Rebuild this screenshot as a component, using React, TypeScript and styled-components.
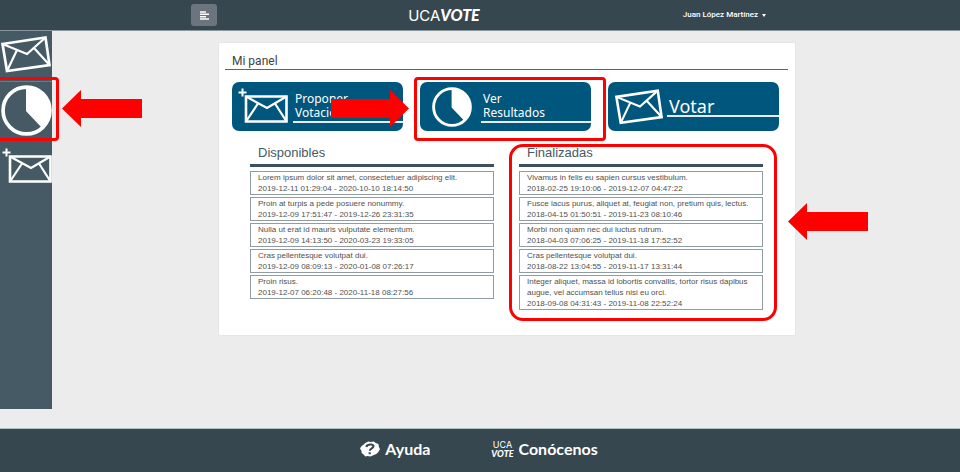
import React from "react";
import styled, { createGlobalStyle, css } from "styled-components";

const slate = "#37474f";
const red = "#ff0000";

const GlobalStyle = createGlobalStyle`
  *, *::before, *::after { box-sizing: border-box; }
  body {
    margin: 0;
    background: #ececec;
    color: #455a64;
    font-family: "Liberation Sans", Arial, sans-serif;
  }
  button { font: inherit; cursor: pointer; }
  svg { display: block; flex: none; }
`;

const Page = styled.div`
  min-height: 100vh;
  display: flex;
  flex-direction: column;
`;

const Header = styled.header`
  display: flex;
  align-items: center;
  height: 31px;
  padding: 0 194px 0 191px;
  background: ${slate};
  border-bottom: 1px solid #8b979d;
`;

const MenuButton = styled.button`
  display: flex;
  align-items: center;
  justify-content: center;
  width: 26px;
  height: 22px;
  padding: 0;
  border: 0;
  border-radius: 3px;
  background: #6c757d;
  color: #fff;
`;

const Brand = styled.a`
  display: flex;
  align-items: baseline;
  margin: 0 12px 0 auto;
  color: #fff;
  text-decoration: none;
  font: 400 15px/20px Inter, sans-serif;
`;

const BrandMark = styled.span`
  font: italic 900 16px/20px Lato, sans-serif;
`;

const UserButton = styled.button`
  display: flex;
  align-items: center;
  gap: 4px;
  margin-left: auto;
  padding: 0;
  border: 0;
  background: none;
  color: #fff;
  && { font: 500 8px/12px Roboto, sans-serif; }
`;

const Caret = styled.span`
  border: 2px solid transparent;
  border-top: 3px solid #fff;
  border-bottom: 0;
`;

const Body = styled.div`
  flex: 1;
  display: flex;
  padding-bottom: 19px;
`;

const Sidebar = styled.nav`
  flex: none;
  width: 52px;
  background: #455a64;
`;

const SideLink = styled.a<{ $height: number; $lift?: number }>`
  position: relative;
  display: flex;
  align-items: center;
  justify-content: flex-end;
  height: ${(p) => p.$height}px;
  padding-bottom: ${(p) => p.$lift ?? 0}px;

  & + & { border-top: 1px solid #6b7c84; }
`;

const Main = styled.main`
  flex: 1;
  min-width: 0;
  padding: 11px 164px 0 166px;
`;

const Panel = styled.section`
  padding: 11px 7px 25px 6px;
  background: #fff;
  border: 1px solid #e6e6e6;
  border-radius: 2px;
`;

const PanelTitle = styled.h1`
  margin: 0;
  padding: 0 7px;
  border-bottom: 1px solid #546871;
  color: #424242;
  font: 400 12px/15px Roboto, sans-serif;
`;

const Actions = styled.div`
  display: grid;
  grid-template-columns: repeat(3, 1fr);
  gap: 17px;
  padding: 12px 9px 0 7px;
`;

const ActionSlot = styled.div`
  position: relative;
`;

const ActionButton = styled.button<{ $inset?: number }>`
  display: flex;
  align-items: center;
  width: 100%;
  height: 49px;
  padding: 0 0 0 ${(p) => p.$inset ?? 6}px;
  border: 0;
  border-radius: 7px;
  background: #00567c;
  color: #fff;
  text-align: left;
`;

const ActionLabel = styled.span<{ $large?: boolean; $gap?: number }>`
  flex: 1;
  margin-left: ${(p) => p.$gap ?? 5}px;
  padding-left: 2px;
  border-bottom: 2px solid #e4eef2;
  font-family: "Noto Sans", sans-serif;
  ${(p) =>
    p.$large
      ? css`
          font-size: 18px;
          line-height: 18px;
        `
      : css`
          margin-top: 1px;
          padding-bottom: 1px;
          font-size: 12px;
          line-height: 14px;
        `}
`;

const Lists = styled.div`
  display: grid;
  grid-template-columns: repeat(2, 1fr);
  gap: 25px;
  padding: 13px 25px 0 25px;
`;

const Column = styled.section`
  position: relative;
`;

const ColumnTitle = styled.h2`
  margin: 0 0 4px;
  padding: 0 8px 2px;
  border-bottom: 3px solid #3c5060;
  font-size: 13px;
  font-weight: 400;
  line-height: 18px;
`;

const Items = styled.ul`
  display: grid;
  gap: 2px;
  margin: 0;
  padding: 0;
  list-style: none;
`;

const Item = styled.li`
  padding: 0 7px;
  border: 1px solid #8f9ca2;
  color: #505050;
  font-size: 8px;
  line-height: 11px;
`;

const Line = styled.div``;

const Footer = styled.footer`
  display: flex;
  justify-content: center;
  gap: 61px;
  height: 44px;
  padding: 0 2px 3px 0;
  background: ${slate};
  border-top: 1px solid #b0bcc1;
`;

const FooterLink = styled.a`
  display: flex;
  align-items: center;
  gap: 5px;
  color: #fff;
  text-decoration: none;
  font: 700 16px/20px Lato, sans-serif;
`;

const StackedMark = styled.span`
  display: grid;
  justify-items: center;
  font: 400 9px/9px Inter, sans-serif;
`;

const StackedBold = styled.span`
  font: italic 900 9px/9px Lato, sans-serif;
`;

const sideMarker = css`
  top: -5px;
  left: -3px;
  width: 62px;
  height: 64px;
  border-radius: 4px;
`;
const actionMarker = css`
  inset: -5px -15px -10px -6px;
  border-radius: 4px;
`;
const columnMarker = css`
  inset: 0 -14px -11px -10px;
  border-radius: 14px;
`;
const markers = { side: sideMarker, action: actionMarker, column: columnMarker };

const Marker = styled.span<{ $kind: keyof typeof markers }>`
  position: absolute;
  z-index: 2;
  border: 3px solid ${red};
  pointer-events: none;
  ${(p) => markers[p.$kind]}
`;

const pointers = {
  side: css`
    left: 62px;
    top: 8px;
  `,
  action: css`
    right: -6px;
    top: 8px;
  `,
  column: css`
    left: calc(100% + 25px);
    top: 59px;
  `,
};

const Pointer = styled.span<{ $kind: keyof typeof pointers }>`
  position: absolute;
  z-index: 3;
  pointer-events: none;
  ${(p) => pointers[p.$kind]}
`;

function Arrow({ right = false, width = 80 }: { right?: boolean; width?: number }) {
  const d = right
    ? `M0 9H${width - 19}V0L${width} 18.500L${width - 19} 37V28H0Z`
    : `M${width} 9H19V0L0 18.500L19 37V28H${width}Z`;
  return (
    <svg width={width} height="37" aria-hidden="true">
      <path d={d} fill={red} />
    </svg>
  );
}

function TiltedEnvelope({ width = 52, height = 38 }: { width?: number; height?: number }) {
  return (
    <svg width={width} height={height} viewBox="0 0 52 38" fill="none" stroke="#fff" aria-hidden="true">
      <path d="M2.500 9L45.500 2.500L49.500 30L7 36Z" strokeWidth="2.700" />
      <path d="M2.500 9L27 19L45.500 2.500M17 15L7 36M34 13L49.500 30" strokeWidth="2.200" />
    </svg>
  );
}

function PlusEnvelope() {
  return (
    <svg width="50" height="38" viewBox="0 0 50 38" fill="none" stroke="#fff" aria-hidden="true">
      <path d="M4.500 0.500V8.500M0.500 4.500H8.500" strokeWidth="2" />
      <path d="M8 8.500H48.500V33.500H8Z" strokeWidth="2.600" />
      <path d="M8 8.500L29 20L48.500 8.500M20 15.500L8 33.500M37 15.500L48.500 33.500" strokeWidth="2.200" />
    </svg>
  );
}

function PieIcon({ size }: { size: number }) {
  return (
    <svg width={size} height={size} viewBox="0 0 50 50" aria-hidden="true">
      <circle cx="25" cy="25" r="23" fill="none" stroke="#fff" strokeWidth="3.600" />
      <path d="M24.500 2V25.500L40 42A23.500 23.500 0 0 0 24.500 2Z" fill="#fff" />
    </svg>
  );
}

function MenuIcon() {
  return (
    <svg width="9" height="9" viewBox="0 0 9 9" stroke="#fff" strokeWidth="1.600" aria-hidden="true">
      <path d="M0 1H6M0 3.300H9M0 5.700H6M0 8H9" />
    </svg>
  );
}

function HelpIcon() {
  return (
    <svg width="20" height="16" viewBox="0 0 19 16" preserveAspectRatio="none" aria-hidden="true">
      <path
        d="M5 2L8 0.500L10 1L13 0.500L15 2L17.500 3L18 6L19 8L17.500 11L15.500 13L12 14.500L10 15.500L7 15L5 15.500L3.500 13.500L1.500 12L1.500 10L0 7.500L1.500 5L3 4Z"
        fill="#fff"
      />
      <path
        d="M6 6C6.500 3 12.500 2.500 12.800 5C13 7.500 9.500 7 9.300 9.800M9.200 11.300V13.300"
        fill="none"
        stroke={slate}
        strokeWidth="2"
      />
    </svg>
  );
}

type Vote = { title: string; dates: string };

const available: Vote[] = [
  { title: "Lorem ipsum dolor sit amet, consectetuer adipiscing elit.", dates: "2019-12-11 01:29:04 - 2020-10-10 18:14:50" },
  { title: "Proin at turpis a pede posuere nonummy.", dates: "2019-12-09 17:51:47 - 2019-12-26 23:31:35" },
  { title: "Nulla ut erat id mauris vulputate elementum.", dates: "2019-12-09 14:13:50 - 2020-03-23 19:33:05" },
  { title: "Cras pellentesque volutpat dui.", dates: "2019-12-09 08:09:13 - 2020-01-08 07:26:17" },
  { title: "Proin risus.", dates: "2019-12-07 06:20:48 - 2020-11-18 08:27:56" },
];

const finished: Vote[] = [
  { title: "Vivamus in felis eu sapien cursus vestibulum.", dates: "2018-02-25 19:10:06 - 2019-12-07 04:47:22" },
  { title: "Fusce lacus purus, aliquet at, feugiat non, pretium quis, lectus.", dates: "2018-04-15 01:50:51 - 2019-11-23 08:10:46" },
  { title: "Morbi non quam nec dui luctus rutrum.", dates: "2018-04-03 07:06:25 - 2019-11-18 17:52:52" },
  { title: "Cras pellentesque volutpat dui.", dates: "2018-08-22 13:04:55 - 2019-11-17 13:31:44" },
  {
    title: "Integer aliquet, massa id lobortis convallis, tortor risus dapibus augue, vel accumsan tellus nisi eu orci.",
    dates: "2018-09-08 04:31:43 - 2019-11-08 22:52:24",
  },
];

function VoteList({ title, votes, children }: { title: string; votes: Vote[]; children?: React.ReactNode }) {
  return (
    <Column>
      <ColumnTitle>{title}</ColumnTitle>
      <Items>
        {votes.map((v) => (
          <Item key={v.dates}>
            <Line>{v.title}</Line>
            <Line>{v.dates}</Line>
          </Item>
        ))}
      </Items>
      {children}
    </Column>
  );
}

export default function App() {
  return (
    <Page>
      <GlobalStyle />
      <Header>
        <MenuButton type="button" aria-label="Menú">
          <MenuIcon />
        </MenuButton>
        <Brand href="#inicio">
          UCA<BrandMark>VOTE</BrandMark>
        </Brand>
        <UserButton type="button">
          Juan López Martínez
          <Caret />
        </UserButton>
      </Header>
      <Body>
        <Sidebar>
          <SideLink href="#votar" $height={50} $lift={4} aria-label="Votar">
            <TiltedEnvelope />
          </SideLink>
          <SideLink href="#resultados" $height={58} $lift={1} aria-label="Ver resultados">
            <PieIcon size={51} />
            <Marker $kind="side" />
            <Pointer $kind="side">
              <Arrow />
            </Pointer>
          </SideLink>
          <SideLink href="#proponer" $height={58} $lift={4} aria-label="Proponer votación">
            <PlusEnvelope />
          </SideLink>
        </Sidebar>
        <Main>
          <Panel>
            <PanelTitle>Mi panel</PanelTitle>
            <Actions>
              <ActionSlot>
                <ActionButton type="button">
                  <PlusEnvelope />
                  <ActionLabel>
                    Proponer
                    <br />
                    Votación
                  </ActionLabel>
                </ActionButton>
                <Pointer $kind="action">
                  <Arrow right width={78} />
                </Pointer>
              </ActionSlot>
              <ActionSlot>
                <ActionButton type="button" $inset={12}>
                  <PieIcon size={40} />
                  <ActionLabel $gap={9}>
                    Ver
                    <br />
                    Resultados
                  </ActionLabel>
                </ActionButton>
                <Marker $kind="action" />
              </ActionSlot>
              <ActionSlot>
                <ActionButton type="button">
                  <TiltedEnvelope width={50} height={37} />
                  <ActionLabel $large $gap={3}>
                    Votar
                  </ActionLabel>
                </ActionButton>
              </ActionSlot>
            </Actions>
            <Lists>
              <VoteList title="Disponibles" votes={available} />
              <VoteList title="Finalizadas" votes={finished}>
                <Marker $kind="column" />
                <Pointer $kind="column">
                  <Arrow />
                </Pointer>
              </VoteList>
            </Lists>
          </Panel>
        </Main>
      </Body>
      <Footer>
        <FooterLink href="#ayuda">
          <HelpIcon />
          Ayuda
        </FooterLink>
        <FooterLink href="#conocenos">
          <StackedMark aria-hidden="true">
            UCA
            <StackedBold>VOTE</StackedBold>
          </StackedMark>
          Conócenos
        </FooterLink>
      </Footer>
    </Page>
  );
}
